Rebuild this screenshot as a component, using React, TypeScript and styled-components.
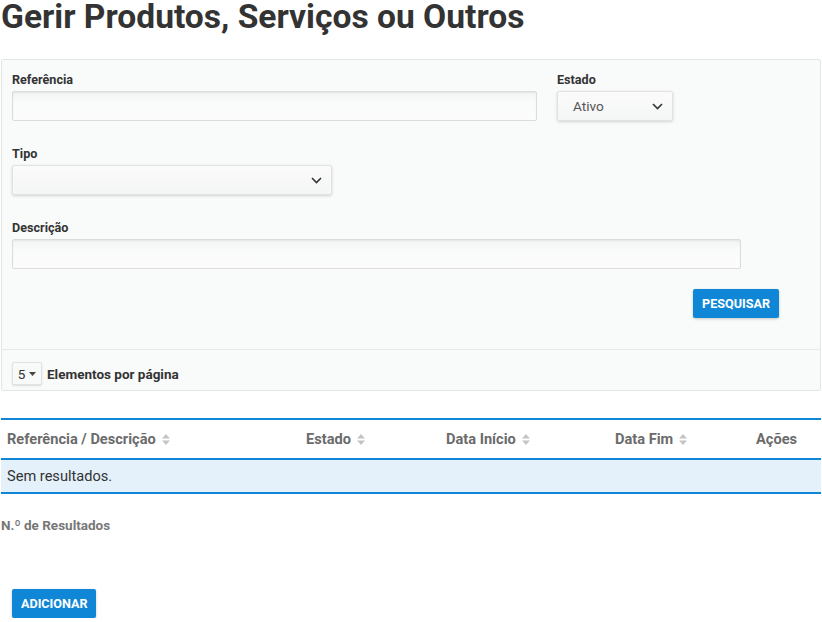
import { createGlobalStyle } from 'styled-components';
import styled from 'styled-components';

const GlobalStyle = createGlobalStyle`
  * { box-sizing: border-box; }
  body {
    margin: 0;
    background: #fff;
    font-family: Roboto, 'Liberation Sans', Arial, sans-serif;
    color: #333;
  }
`;

const BLUE = '#0f87d6';

const Page = styled.div`
  padding: 0 1px;
  width: 822px;
`;

const Title = styled.h1`
  margin: 0;
  font-size: 33.6px;
  font-weight: 700;
  line-height: 34px;
  color: #333;
`;

const Panel = styled.section`
  margin-top: 25px;
  background: #f9fafa;
  border: 1px solid #e4e6e6;
  border-radius: 2px;
`;

const PanelBody = styled.div`
  padding: 12px 10px 31px 10px;
  display: flex;
  flex-direction: column;
  gap: 25px;
`;

const FieldRow = styled.div<{ $cols: string }>`
  display: grid;
  grid-template-columns: ${({ $cols }) => $cols};
  column-gap: 20px;
`;

const Field = styled.div`
  display: flex;
  flex-direction: column;
  gap: 4px;
`;

const Label = styled.label`
  font-size: 12.6px;
  font-weight: 700;
  line-height: 15px;
  color: #333;
`;

const TextInput = styled.div`
  height: 30px;
  border: 1px solid #dcdcdc;
  border-radius: 2px;
  background: linear-gradient(#f2f3f3, #fafbfb 40%, #fcfcfc);
  box-shadow: inset 0 1px 2px rgba(0, 0, 0, 0.06);
`;

const Select = styled.div`
  height: 30px;
  border: 1px solid #e2e2e2;
  border-radius: 2px;
  background: linear-gradient(#fbfbfb, #f4f5f5);
  box-shadow: 0 1px 3px rgba(0, 0, 0, 0.16);
  display: flex;
  align-items: center;
  justify-content: space-between;
  padding: 0 9px 0 15px;
  font-size: 13.6px;
  color: #555;
`;

const Actions = styled.div`
  display: flex;
  justify-content: flex-end;
  padding-right: 31px;
  margin-top: -5px;
`;

const Button = styled.button`
  height: 29px;
  padding: 0 9px;
  border: none;
  border-radius: 2px;
  background: ${BLUE};
  color: #fff;
  font-family: Roboto, 'Liberation Sans', Arial, sans-serif;
  font-size: 12.6px;
  font-weight: 700;
  box-shadow: 0 1px 3px rgba(0, 0, 0, 0.2);
`;

const PanelFooter = styled.div`
  border-top: 1px solid #e8eaea;
  padding: 12px 10px 5px;
  display: flex;
  align-items: center;
  gap: 5px;
  font-size: 13.5px;
  font-weight: 700;
  color: #333;
`;

const PageSize = styled.div`
  height: 23px;
  width: 30px;
  display: flex;
  align-items: center;
  justify-content: center;
  gap: 4px;
  border: 1px solid #e2e2e2;
  border-radius: 2px;
  background: #f8f9f9;
  box-shadow: 0 1px 2px rgba(0, 0, 0, 0.12);
  font-size: 13.5px;
  font-weight: 400;
  color: #333;
`;

const Table = styled.table`
  margin-top: 27px;
  width: 820px;
  border-collapse: collapse;
  border-top: 2px solid ${BLUE};
  border-bottom: 2px solid ${BLUE};
  table-layout: fixed;
`;

const Th = styled.th<{ $w: number }>`
  width: ${({ $w }) => $w}px;
  height: 40px;
  padding: 0 6px;
  text-align: left;
  font-size: 14.6px;
  font-weight: 700;
  color: #6b6b6b;
  border-bottom: 2px solid ${BLUE};
  white-space: nowrap;
`;

const SortIcon = styled.svg`
  margin-left: 6px;
  vertical-align: -1px;
`;

const EmptyCell = styled.td`
  height: 34px;
  padding: 0 6px;
  background: #e4f1fa;
  font-size: 14.6px;
  color: #333;
`;

const Count = styled.div`
  margin-top: 23px;
  font-size: 13.5px;
  font-weight: 700;
  color: #777;
  line-height: 16px;
`;

const Footer = styled.div`
  margin-top: 56px;
  padding-left: 11px;
`;

function Chevron() {
  return (
    <svg width="11" height="7" viewBox="0 0 11 7">
      <path d="M1 1l4.5 4.5L10 1" fill="none" stroke="#333" strokeWidth="1.6" />
    </svg>
  );
}

function Sort() {
  return (
    <SortIcon width="8" height="11" viewBox="0 0 8 11">
      <path d="M4 0l4 4.5H0z M4 11L0 6.5h8z" fill="#c4c4c4" />
    </SortIcon>
  );
}

const columns = [
  { label: 'Referência / Descrição', w: 299, sort: true },
  { label: 'Estado', w: 140, sort: true },
  { label: 'Data Início', w: 169, sort: true },
  { label: 'Data Fim', w: 141, sort: true },
  { label: 'Ações', w: 71, sort: false },
];

export default function App() {
  return (
    <Page>
      <GlobalStyle />
      <Title>Gerir Produtos, Serviços ou Outros</Title>

      <Panel>
        <PanelBody>
          <FieldRow $cols="525px 116px">
            <Field>
              <Label>Referência</Label>
              <TextInput />
            </Field>
            <Field>
              <Label>Estado</Label>
              <Select>
                Ativo
                <Chevron />
              </Select>
            </Field>
          </FieldRow>

          <FieldRow $cols="320px">
            <Field>
              <Label>Tipo</Label>
              <Select>
                <span />
                <Chevron />
              </Select>
            </Field>
          </FieldRow>

          <FieldRow $cols="729px">
            <Field>
              <Label>Descrição</Label>
              <TextInput />
            </Field>
          </FieldRow>

          <Actions>
            <Button>PESQUISAR</Button>
          </Actions>
        </PanelBody>
        <PanelFooter>
          <PageSize>
            5
            <svg width="7" height="4" viewBox="0 0 7 4">
              <path d="M0 0h7L3.5 4z" fill="#444" />
            </svg>
          </PageSize>
          Elementos por página
        </PanelFooter>
      </Panel>

      <Table>
        <thead>
          <tr>
            {columns.map((c) => (
              <Th key={c.label} $w={c.w}>
                {c.label}
                {c.sort && <Sort />}
              </Th>
            ))}
          </tr>
        </thead>
        <tbody>
          <tr>
            <EmptyCell colSpan={5}>Sem resultados.</EmptyCell>
          </tr>
        </tbody>
      </Table>

      <Count>N.º de Resultados</Count>

      <Footer>
        <Button>ADICIONAR</Button>
      </Footer>
    </Page>
  );
}
